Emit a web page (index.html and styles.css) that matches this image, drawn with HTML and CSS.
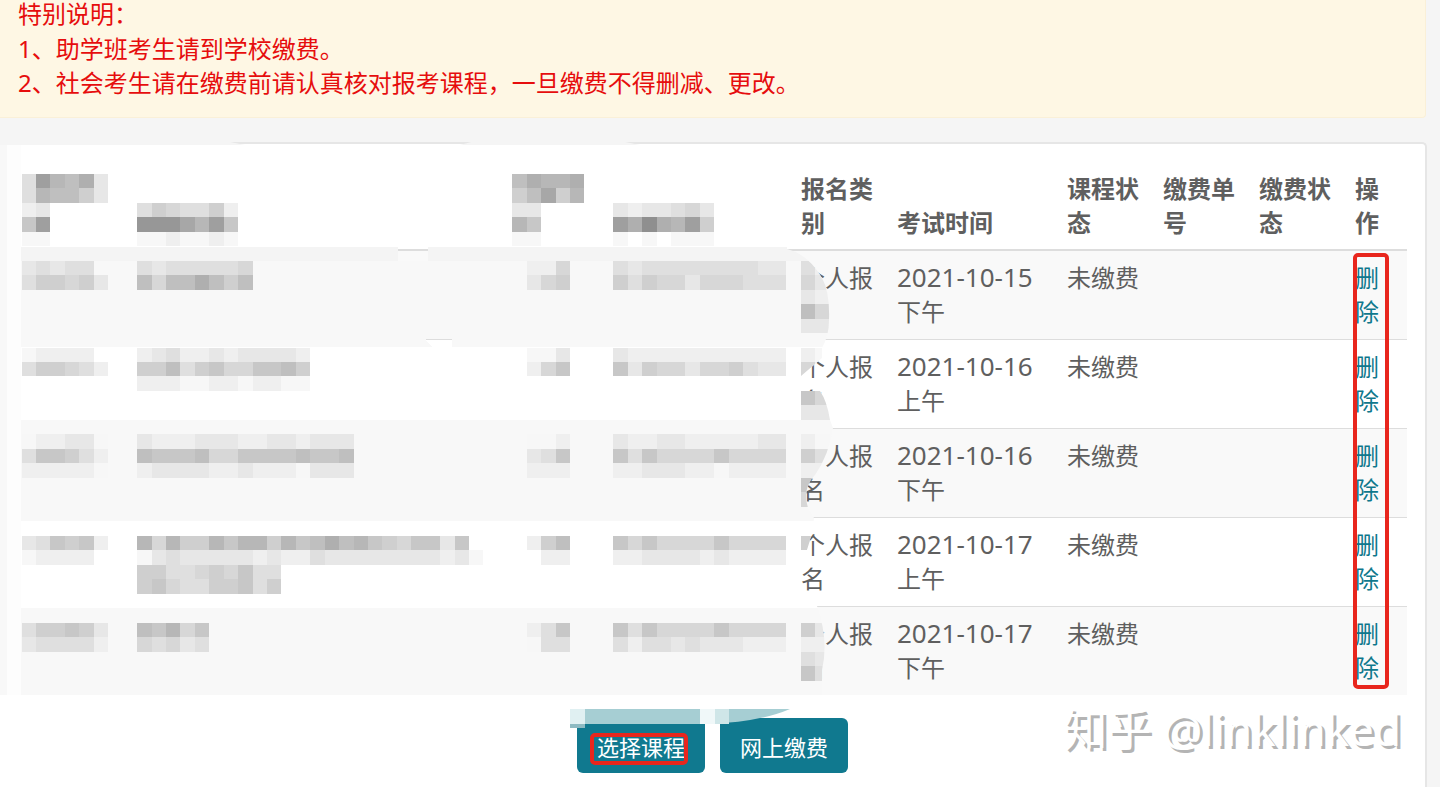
FILE: index.html
```
<!DOCTYPE html>
<html lang="zh-CN">

<head>
    <meta charset="UTF-8">
    <meta name="viewport" content="width=device-width, initial-scale=1.0">
    <title>网上缴费</title>
    <link rel="stylesheet" href="styles.css">
</head>

<body>
    <main class="page">
        <div class="notice">
            <div class="notice-title">特别说明：</div>
            <div>1、助学班考生请到学校缴费。</div>
            <div>2、社会考生请在缴费前请认真核对报考课程，一旦缴费不得删减、更改。</div>
        </div>

        <section class="card">
            <div class="table-wrap">
                <table class="courses">
                    <colgroup>
                        <col class="col-code">
                        <col>
                        <col class="col-type">
                        <col class="col-number">
                        <col class="col-status">
                        <col class="col-time">
                        <col class="col-status">
                        <col class="col-status">
                        <col class="col-status">
                        <col class="col-action">
                    </colgroup>
                    <thead>
                        <tr>
                            <th></th>
                            <th></th>
                            <th></th>
                            <th></th>
                            <th>报名类别</th>
                            <th>考试时间</th>
                            <th>课程状态</th>
                            <th>缴费单号</th>
                            <th>缴费状态</th>
                            <th>操作</th>
                        </tr>
                    </thead>
                    <tbody>
                        <tr>
                            <td></td>
                            <td></td>
                            <td></td>
                            <td></td>
                            <td>个人报名</td>
                            <td><span class="date">2021-10-15</span> 下午</td>
                            <td>未缴费</td>
                            <td></td>
                            <td></td>
                            <td><a href="#">删除</a></td>
                        </tr>
                        <tr>
                            <td></td>
                            <td></td>
                            <td></td>
                            <td></td>
                            <td>个人报名</td>
                            <td><span class="date">2021-10-16</span> 上午</td>
                            <td>未缴费</td>
                            <td></td>
                            <td></td>
                            <td><a href="#">删除</a></td>
                        </tr>
                        <tr>
                            <td></td>
                            <td></td>
                            <td></td>
                            <td></td>
                            <td>个人报名</td>
                            <td><span class="date">2021-10-16</span> 下午</td>
                            <td>未缴费</td>
                            <td></td>
                            <td></td>
                            <td><a href="#">删除</a></td>
                        </tr>
                        <tr>
                            <td></td>
                            <td></td>
                            <td></td>
                            <td></td>
                            <td>个人报名</td>
                            <td><span class="date">2021-10-17</span> 上午</td>
                            <td>未缴费</td>
                            <td></td>
                            <td></td>
                            <td><a href="#">删除</a></td>
                        </tr>
                        <tr>
                            <td></td>
                            <td></td>
                            <td></td>
                            <td></td>
                            <td>个人报名</td>
                            <td><span class="date">2021-10-17</span> 下午</td>
                            <td>未缴费</td>
                            <td></td>
                            <td></td>
                            <td><a href="#">删除</a></td>
                        </tr>
                    </tbody>
                </table>
                <div class="mark mark-delete"></div>
            </div>

            <div class="actions">
                <button type="button" class="btn">选择课程<span class="mark mark-select"></span></button>
                <button type="button" class="btn">网上缴费</button>
            </div>
            <div class="watermark">知乎 @linklinked</div>
        </section>

        <!-- blurred out personal data -->
        <svg class="mosaic" width="860" height="787" viewBox="0 0 860 787" aria-hidden="true">
            <defs>
                <clipPath id="brush">
                    <path d="M0 141H225L245 145H460L475 141H620L640 145H787V249Q808 254 822 278Q830 292 829 320Q829 336 822 348V358L801 376V391H820Q827 401 830 420L833 428Q829 455 815 475Q802 488 808 508L814 518Q812 540 801 566V593Q812 598 817 606Q829 640 822 670V695H0Z" />
                </clipPath>
            </defs>
            <g id="tiles" clip-path="url(#brush)" shape-rendering="crispEdges">
                <rect x="0" y="141" width="860" height="4" fill="#f5f5f5" />
                <rect x="0" y="145" width="860" height="102" fill="#fff" />
                <rect x="7" y="247" width="853" height="14" fill="#f4f4f4" />
                <rect x="7" y="261" width="853" height="86" fill="#f8f8f8" />
                <rect x="0" y="347" width="860" height="73" fill="#fff" />
                <rect x="7" y="420" width="853" height="101" fill="#f8f8f8" />
                <rect x="0" y="521" width="860" height="87" fill="#fff" />
                <rect x="7" y="608" width="853" height="87" fill="#f8f8f8" />
                <rect x="398" y="247" width="30" height="2" fill="#fff" />
                <rect x="398" y="249" width="30" height="2" fill="#ddd" />
                <rect x="398" y="251" width="30" height="10" fill="#f9f9f9" />
                <rect x="426" y="339" width="26" height="1" fill="#ddd" />
                <path d="M426 340H452V347H432Z" fill="#fff" />
                <rect x="7" y="145" width="14" height="550" fill="#fdfdfd" />
                <rect x="0" y="145" width="7" height="550" fill="#f8f8f8" />
            </g>
            <path d="M585 709H790Q760 722 708 724H585Z" fill="#a6ced3" />
            <rect x="570" y="709" width="15" height="15" fill="#e0f0f2" />
            <rect x="570" y="724" width="15" height="4" fill="#8dbac2" />
            <rect x="700" y="709" width="15" height="15" fill="#f0f8f9" />
            <rect x="715" y="709" width="14" height="15" fill="#cfe6e8" />
        </svg>
    </main>

    <script>
        // row, column, one hex digit per tile (0 = dark, f = white)
        var tiles = [
            [12, 1, 'b3675c'], [12, 35, '75665'],
            [13, 1, 'b6779c'], [13, 35, '97496'],
            [14, 1, 'dc'], [14, 9, 'b9abb9d'], [14, 35, 'cc'], [14, 42, 'cdccbac'],
            [15, 1, '83'], [15, 9, '2224638'], [15, 35, '68'], [15, 42, '3515639'],
            [16, 1, 'ee'], [16, 9, 'eedeede'], [16, 35, 'ee'], [16, 42, 'efefeee'],
            [18, 1, 'cbcbb'], [18, 9, 'bcbbbbba'], [18, 36, 'dda'], [18, 42, 'bcbbbbbbbbcc'], [18, 55, 'bd'],
            [19, 1, 'b99a9c'], [19, 9, '7a775797'], [19, 36, 'ca9'], [19, 42, '9b9aacaaabbb'], [19, 55, 'ac'],
            [20, 55, 'cd'],
            [21, 55, '7a'],
            [22, 55, 'cc'],
            [24, 1, 'edddd'], [24, 9, 'dcbddcdccccd'], [24, 36, 'eec'], [24, 42, 'cddddddddddd'], [24, 55, 'de'],
            [25, 1, 'b99abd'], [25, 9, '997b98aa8879'], [25, 36, 'da8'], [25, 42, '8c9aacaa9bcc'], [25, 55, 'ad'],
            [26, 9, 'dddeeddeddee'],
            [27, 55, '8a'],
            [28, 55, 'cc'],
            [30, 1, 'eddcce'], [30, 9, 'cdddcccddccdccc'], [30, 36, 'eed'], [30, 42, 'cddccdddddcc'], [30, 55, 'de'],
            [31, 1, 'b889bd'], [31, 9, '78887aa88887887'], [31, 36, 'cb8'], [31, 42, '8b8aaaa8aaaa'], [31, 55, '9b'],
            [32, 1, 'ddddde'], [32, 9, 'dccccddcdddeccc'], [32, 36, 'ddd'], [32, 42, 'ddcccddedddd'], [32, 55, 'dd'],
            [33, 55, '8a'],
            [34, 55, 'ac'],
            [37, 1, 'cb898d'], [37, 9, '6a6996866968757689a88c8'], [37, 36, 'd97'], [37, 42, '8a8aaaa8aaaa'], [37, 55, '9a'],
            [38, 1, 'eddddf'], [38, 9, 'ecbcccccdcddbccccccccdce'], [38, 37, 'dd'], [38, 42, 'ddccccdcdddd'],
            [39, 9, '99bba9a8bb'],
            [40, 9, '98abb998b9'],
            [43, 1, 'b9989c'], [43, 9, '786a8'], [43, 36, 'db8'], [43, 42, '8b8aaaa8aaaa'], [43, 55, '9c'],
            [44, 1, 'cbbbbd'], [44, 9, 'abacb'], [44, 36, 'ebb'], [44, 42, 'bdbbcbcccddd'], [44, 55, 'dd'],
            [45, 55, 'bc'],
            [46, 55, '8b']
        ];

        var group = document.getElementById('tiles');

        function tileX(col) {
            return Math.round(7.2 + col * 14.43);
        }

        function tileY(row) {
            return Math.round(row * 14.48);
        }

        tiles.forEach(function (run) {
            for (var i = 0; i < run[2].length; i++) {
                var col = run[1] + i;
                var level = 135 + 8 * parseInt(run[2][i], 16);
                var rect = document.createElementNS('http://www.w3.org/2000/svg', 'rect');
                rect.setAttribute('x', tileX(col));
                rect.setAttribute('y', tileY(run[0]));
                rect.setAttribute('width', tileX(col + 1) - tileX(col));
                rect.setAttribute('height', tileY(run[0] + 1) - tileY(run[0]));
                rect.setAttribute('fill', 'rgb(' + level + ',' + level + ',' + level + ')');
                group.appendChild(rect);
            }
        });
    </script>
</body>

</html>
```
FILE: styles.css
```
body {
    margin: 0;
    background-color: #f5f5f5;
    color: #5f5f5f;
    font-family: "Noto Sans", "Noto Sans CJK SC", sans-serif;
    font-size: 24px;
    line-height: 34px;
}

.page {
    position: relative;
    display: flex;
    flex-direction: column;
    min-height: 100vh;
}

.notice {
    margin: 0 14px 24px 0;
    padding: 0 18px 17px;
    background-color: #fef7e4;
    border-bottom: 1px solid #faf0d8;
    border-right: 1px solid #faf0d8;
    border-radius: 0 0 4px 0;
    color: #e60d0d;
}

.notice-title {
    margin-bottom: 4px;
    line-height: 28px;
}

.card {
    position: relative;
    flex: 1;
    margin-right: 13px;
    padding: 17px 0 14px;
    background-color: #fff;
    border-top: 2px solid #e6e6e6;
    border-right: 2px solid #e6e6e6;
    border-radius: 0 5px 0 0;
}

.table-wrap {
    position: relative;
    margin: 0 18px 0 9px;
}

.courses {
    width: 100%;
    table-layout: fixed;
    border-collapse: separate;
    border-spacing: 0;
}

.courses th,
.courses td {
    height: 68px;
    text-align: left;
}

.courses th {
    padding: 11px 12px 9px;
    vertical-align: bottom;
    border-bottom: 1px solid #ddd;
}

.courses td {
    padding: 10px 12px;
    vertical-align: top;
    border-top: 1px solid #ddd;
}

.courses tbody tr:nth-child(odd) {
    background-color: #f9f9f9;
}

.courses a {
    color: #0f788d;
    text-decoration: none;
}

.col-code {
    width: 116px;
}

.col-type {
    width: 101px;
}

.col-number {
    width: 188px;
}

.col-status {
    width: 96px;
}

.col-time {
    width: 170px;
}

.col-action {
    width: 64px;
}

.date {
    font-size: 26px;
    line-height: 1;
}

.mark {
    position: absolute;
    box-sizing: border-box;
    border: 4px solid #e8261d;
    border-radius: 5px;
}

.mark-delete {
    top: 92px;
    right: 18px;
    bottom: 6px;
    width: 36px;
}

.mark-select {
    top: 15px;
    right: 17px;
    bottom: 8px;
    left: 13px;
}

.actions {
    display: flex;
    justify-content: center;
    gap: 15px;
    margin-top: 23px;
}

.btn {
    position: relative;
    height: 55px;
    padding: 0 20px;
    border: none;
    border-radius: 6px;
    background-color: #10798f;
    color: #fff;
    font-family: inherit;
    font-size: 22px;
    cursor: pointer;
}

.watermark {
    position: absolute;
    right: 24px;
    bottom: 28px;
    color: #fff;
    font-size: 44px;
    line-height: 60px;
    text-shadow: 3px 3px 0 #b4b4b4;
}

.mosaic {
    position: absolute;
    top: 0;
    left: 0;
    pointer-events: none;
}
```
